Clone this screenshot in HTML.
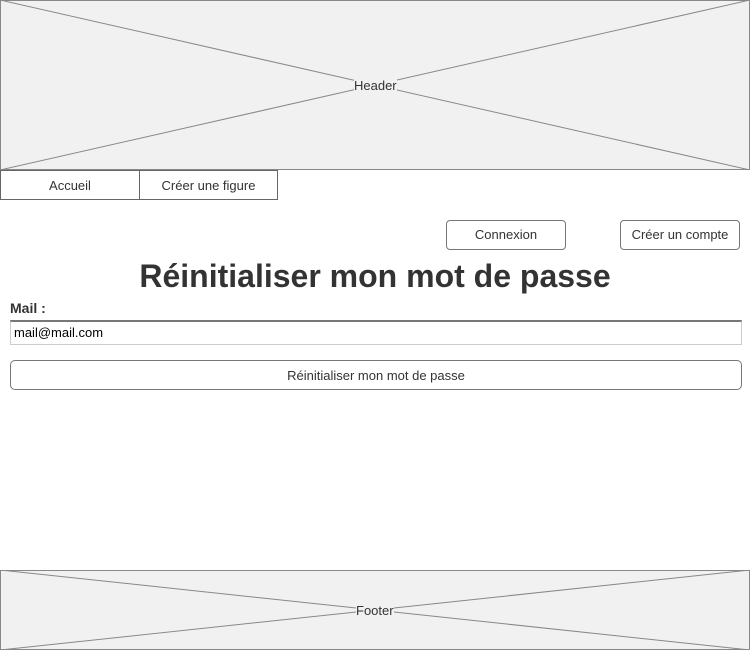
<!DOCTYPE html>
<html><head><meta charset="utf-8"><style>
*{margin:0;padding:0;box-sizing:border-box}
body{width:750px;height:650px;background:#fff;font-family:"Liberation Sans",sans-serif;color:#333;position:relative;overflow:hidden}
.abs{position:absolute}
.ph{background:#f1f1f1;border:1px solid #888}
.lbl{font-size:13px;color:#333;background:#f1f1f1;line-height:14px}
.tab{top:170px;height:30px;border:1px solid #666;font-size:13px;text-align:center;line-height:29px;color:#333;background:#fff}
.btn{border:1px solid #777;border-radius:4px;font-size:13px;text-align:center;color:#333;background:#fff}
</style></head><body>
<div class="abs ph" style="left:0;top:0;width:750px;height:170px">
<svg width="750" height="170" style="position:absolute;left:-1px;top:-1px"><line x1="0" y1="0" x2="750" y2="170" stroke="#888"/><line x1="0" y1="170" x2="750" y2="0" stroke="#888"/></svg>
<div class="abs lbl" style="left:353px;top:78px">Header</div></div>
<div class="abs tab" style="left:0;width:140px">Accueil</div>
<div class="abs tab" style="left:139px;width:139px">Créer une figure</div>
<div class="abs btn" style="left:446px;top:220px;width:120px;height:30px;line-height:28px">Connexion</div>
<div class="abs btn" style="left:620px;top:220px;width:120px;height:30px;line-height:28px">Créer un compte</div>
<div class="abs" style="left:0;top:256px;width:750px;text-align:center;font-size:32px;font-weight:bold;color:#333;line-height:40px">Réinitialiser mon mot de passe</div>
<div class="abs" style="left:10px;top:300px;font-size:14px;font-weight:bold;line-height:16px">Mail :</div>
<div class="abs" style="left:10px;top:320px;width:732px;height:25px;border:1px solid #ccc;border-top:2px solid #777;font-size:13px;color:#000;padding-left:3px;line-height:22px">mail@mail.com</div>
<div class="abs btn" style="left:10px;top:360px;width:732px;height:30px;line-height:29px;border-radius:5px">Réinitialiser mon mot de passe</div>
<div class="abs ph" style="left:0;top:570px;width:750px;height:80px">
<svg width="750" height="80" style="position:absolute;left:-1px;top:-1px"><line x1="0" y1="0" x2="750" y2="80" stroke="#888"/><line x1="0" y1="80" x2="750" y2="0" stroke="#888"/></svg>
<div class="abs lbl" style="left:355px;top:33px">Footer</div></div>
</body></html>
